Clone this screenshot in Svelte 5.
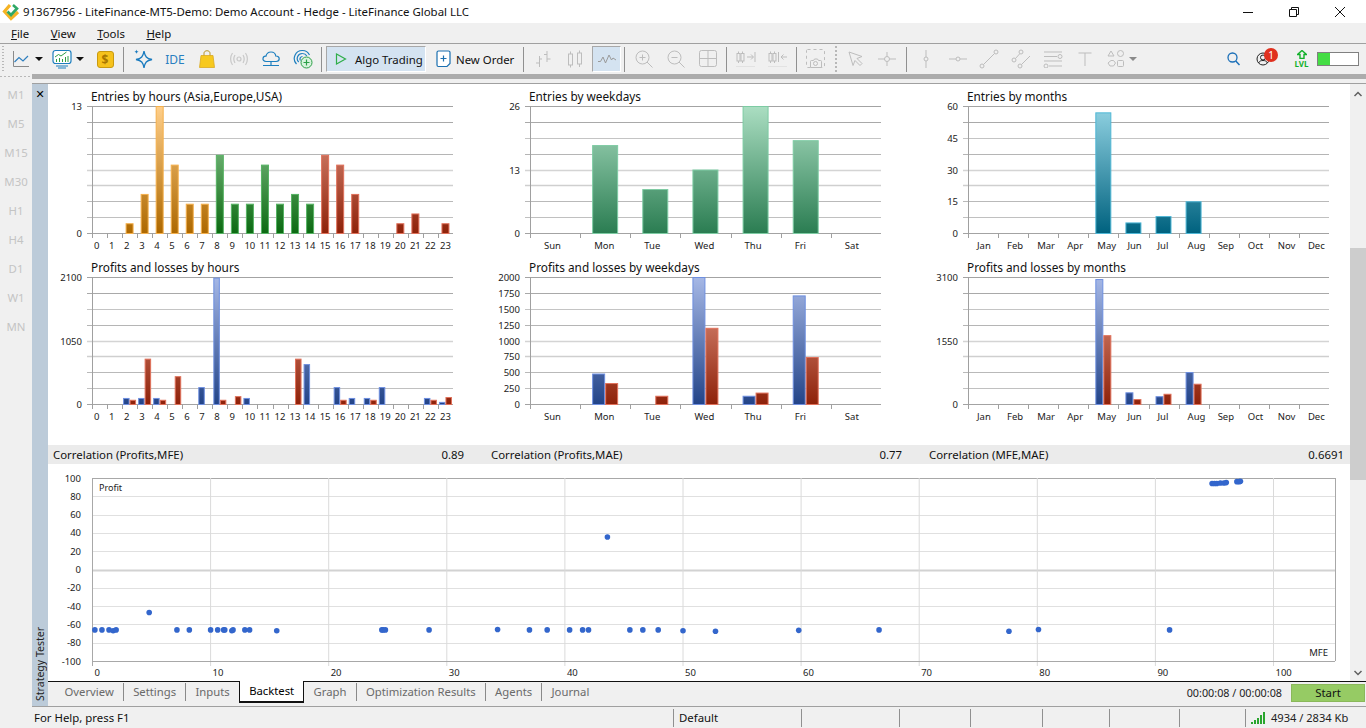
<script lang="ts">
	const hours = Array.from({ length: 24 }, (_, i) => String(i));
	const weekdays = ['Sun', 'Mon', 'Tue', 'Wed', 'Thu', 'Fri', 'Sat'];
	const months = ['Jan', 'Feb', 'Mar', 'Apr', 'May', 'Jun', 'Jul', 'Aug', 'Sep', 'Oct', 'Nov', 'Dec'];

	const palette: Record<string, { top: string; bottom: string; edge: string }> = {
		orange: { top: '#ffcf8a', bottom: '#ad6800', edge: '#f5b04c' },
		green: { top: '#9fd4a4', bottom: '#0c6a12', edge: '#55b363' },
		red: { top: '#ea9f8c', bottom: '#8e220a', edge: '#e0705a' },
		mint: { top: '#abdec2', bottom: '#2b7d52', edge: '#7dcba3' },
		teal: { top: '#92d3e3', bottom: '#00627f', edge: '#4fb7d6' },
		blue: { top: '#a6b8e6', bottom: '#234488', edge: '#6e8fe0' }
	};

	const hourColor = (i: number) => (i < 8 ? 'orange' : i < 15 ? 'green' : 'red');

	const charts = [
		{
			title: 'Entries by hours (Asia,Europe,USA)',
			labels: hours,
			labelOffset: 2,
			width: 361,
			max: 13,
			ticks: ['13', '', '', '', '', '', '', '', '0'],
			barWidth: 8,
			series: [
				{
					colorAt: hourColor,
					offset: 3.5,
					values: [0, 0, 1, 4, 13, 7, 3, 3, 8, 3, 3, 7, 3, 4, 3, 8, 7, 4, 0, 0, 1, 2, 0, 1]
				}
			]
		},
		{
			title: 'Entries by weekdays',
			labels: weekdays,
			labelOffset: 14,
			width: 351,
			max: 26,
			ticks: ['26', '', '', '', '13', '', '', '', '0'],
			barWidth: 26,
			series: [{ colorAt: () => 'mint', offset: 12, values: [0, 18, 9, 13, 26, 19, 0] }]
		},
		{
			title: 'Entries by months',
			labels: months,
			labelOffset: 9,
			width: 361,
			max: 60,
			ticks: ['60', '', '45', '', '30', '', '15', '', '0'],
			barWidth: 16,
			series: [{ colorAt: () => 'teal', offset: 7, values: [0, 0, 0, 0, 57, 5, 8, 15, 0, 0, 0, 0] }]
		},
		{
			title: 'Profits and losses by hours',
			labels: hours,
			labelOffset: 2,
			width: 361,
			max: 2100,
			ticks: ['2100', '', '', '', '1050', '', '', '', '0'],
			barWidth: 6.5,
			series: [
				{
					colorAt: () => 'blue',
					offset: 1,
					values: [0, 0, 100, 100, 100, 0, 0, 280, 2090, 0, 100, 0, 0, 0, 660, 0, 280, 100, 100, 280, 0, 0, 100, 35]
				},
				{
					colorAt: () => 'red',
					offset: 7.5,
					values: [0, 0, 70, 750, 70, 460, 0, 0, 70, 130, 0, 0, 0, 750, 0, 0, 70, 0, 70, 0, 0, 0, 70, 115]
				}
			]
		},
		{
			title: 'Profits and losses by weekdays',
			labels: weekdays,
			labelOffset: 14,
			width: 351,
			max: 2000,
			ticks: ['2000', '1750', '1500', '1250', '1000', '750', '500', '250', '0'],
			barWidth: 13,
			series: [
				{ colorAt: () => 'blue', offset: 12, values: [0, 480, 0, 2000, 130, 1710, 0] },
				{ colorAt: () => 'red', offset: 25, values: [0, 330, 130, 1200, 180, 740, 0] }
			]
		},
		{
			title: 'Profits and losses by months',
			labels: months,
			labelOffset: 9,
			width: 361,
			max: 3100,
			ticks: ['3100', '', '', '', '1550', '', '', '', '0'],
			barWidth: 8,
			series: [
				{ colorAt: () => 'blue', offset: 7, values: [0, 0, 0, 0, 3050, 285, 190, 780, 0, 0, 0, 0] },
				{ colorAt: () => 'red', offset: 15, values: [0, 0, 0, 0, 1680, 120, 250, 495, 0, 0, 0, 0] }
			]
		}
	];

	const plotTop = 22;
	const plotH = 127;
	const axisX = 44;
	const gridColors = ['#a3a3a3', '#a9a9a9', '#c4c4c4', '#b5b5b5', '#d4d4d4', '#cfcfcf', '#b9b9b9', '#c0c0c0', '#a3a3a3'];
	const gridY = (i: number) => Math.round(plotTop + (plotH * i) / 8) + 0.5;

	const correlations = [
		{ label: 'Correlation (Profits,MFE)', value: '0.89' },
		{ label: 'Correlation (Profits,MAE)', value: '0.77' },
		{ label: 'Correlation (MFE,MAE)', value: '0.6691' }
	];

	// scatter: [MFE, Profit]
	const points = [
		[0.2, -66], [0.8, -66], [1.4, -66], [1.75, -67], [2, -66], [4.8, -47], [7.15, -66], [8.2, -66],
		[10, -66], [10.6, -66], [11.1, -66], [11.2, -66], [11.8, -67], [11.9, -66], [12.9, -66], [13.3, -66],
		[15.6, -67], [24.5, -66], [24.6, -66], [24.8, -66], [28.5, -66], [34.3, -65.5], [37, -66], [38.5, -66],
		[40.4, -66], [41.5, -66], [42, -66], [43.6, 35.5], [45.5, -66], [46.6, -66], [47.9, -66], [50, -67],
		[52.75, -67.5], [59.8, -66.5], [66.6, -66], [77.6, -67.5], [80.1, -65.5], [91.2, -66],
		[94.8, 94], [95, 94], [95.2, 94], [95.5, 94.5], [95.8, 94.5], [96, 95], [96.9, 96], [97.1, 96], [97.2, 96.5]
	];
	const scX = (v: number) => 44.5 + v * 11.81;
	const scY = (v: number) => 14 + ((100 - v) / 200) * 183;
	const scTicksX = Array.from({ length: 11 }, (_, i) => i * 10);
	const scTicksY = Array.from({ length: 11 }, (_, i) => 100 - i * 20);

	const frames = ['M1', 'M5', 'M15', 'M30', 'H1', 'H4', 'D1', 'W1', 'MN'];
	const menus = [
		['F', 'ile'],
		['V', 'iew'],
		['T', 'ools'],
		['H', 'elp']
	];
	const tabs = ['Overview', 'Settings', 'Inputs', 'Backtest', 'Graph', 'Optimization Results', 'Agents', 'Journal'];
	const statusCells = [98, 71, 72, 67, 70, 66];
</script>

<div class="window">
	<header class="titlebar">
		<svg class="logo" width="20" height="20" viewBox="0 0 20 20">
			<path d="M9 3 3.5 9.5 10 16.5 17 10" fill="none" stroke="#f5b324" stroke-width="3.2" />
			<path d="M6.5 9.5 10 13 16 6.5 12 3" fill="none" stroke="#2fa866" stroke-width="2.6" />
		</svg>
		<span class="title-text">91367956 - LiteFinance-MT5-Demo: Demo Account - Hedge - LiteFinance Global LLC</span>
		<div class="win-controls">
			<svg width="12" height="12" viewBox="0 0 12 12"><path d="M1 6.5h10" stroke="#111" /></svg>
			<svg width="12" height="12" viewBox="0 0 12 12"><path d="M1.5 3.5h7v7h-7zM3.5 3.5v-2h7v7h-2" fill="none" stroke="#111" /></svg>
			<svg width="12" height="12" viewBox="0 0 12 12"><path d="M1 1l10 10M11 1 1 11" stroke="#111" /></svg>
		</div>
	</header>

	<nav class="menubar">
		{#each menus as m}
			<span class="menu-item"><u>{m[0]}</u>{m[1]}</span>
		{/each}
	</nav>

	<div class="toolbar">
		<span class="grip"></span>
		<span class="ico w-24">
			<svg width="18" height="18" viewBox="0 0 18 18"><path d="M1.5 1v15.5H17" fill="none" stroke="#8a8a8a" /><path d="M2.5 12 7 7.5l4 3.5 5-5" fill="none" stroke="#2f7fbf" stroke-width="1.2" /></svg>
		</span>
		<span class="caret dark first"></span>
		<span class="ico w-26 monitor">
			<svg width="20" height="20" viewBox="0 0 20 20">
				<rect x="1" y="1.5" width="18" height="13" rx="2.5" fill="#fff" stroke="#1d7fbf" stroke-width="1.2" />
				<path d="M3 8l3.500-2.500L9 7l5.500-4" fill="none" stroke="#2f9e44" />
				<path d="M4.500 13v-3M7.500 13V9M10.500 13v-3M13.500 13V8M16 13V7" stroke="#2f9e44" />
				<path d="M4 17h12M6 19h8" stroke="#1d7fbf" />
			</svg>
		</span>
		<span class="caret dark second"></span>
		<span class="ico w-30 coin">
			<span class="dollar">$</span>
		</span>
		<span class="sep"></span>
		<span class="ico">
			<svg width="20" height="20" viewBox="0 0 20 20">
				<path d="M11 2c.9 5.500 2.500 7.500 8 8.500-5.500 1-7.100 3-8 8.500-.9-5.500-2.500-7.500-8-8.500 5.500-1 7.100-3 8-8.500z" fill="none" stroke="#1a7bbf" stroke-width="1.3" />
				<path d="M3.500 .5c.3 1.500.7 1.900 2.200 2.200-1.500.3-1.900.7-2.200 2.200C3.200 3.400 2.800 3 1.300 2.700 2.800 2.400 3.200 2 3.500 .5z" fill="#1a7bbf" />
			</svg>
		</span>
		<span class="ico ide">IDE</span>
		<span class="ico">
			<svg width="16" height="18" viewBox="0 0 16 18">
				<path d="M5 6V3c0-3 6-3 6 0v3" fill="none" stroke="#b8962a" />
				<path d="M2 5.500h12l1.500 12H.5z" fill="#f7c91e" stroke="#d9aa22" stroke-width=".8" />
			</svg>
		</span>
		<span class="ico">
			<svg width="18" height="14" viewBox="0 0 18 14" fill="none" stroke="#c8c8c8" stroke-width="1.2">
				<circle cx="9" cy="7" r="2" />
				<path d="M5 3c-1.500 2.500-1.500 5.500 0 8M13 3c1.500 2.500 1.500 5.500 0 8M2.500 1c-2.500 3.500-2.500 8.500 0 12M15.500 1c2.500 3.500 2.500 8.500 0 12" />
			</svg>
		</span>
		<span class="ico">
			<svg width="18" height="18" viewBox="0 0 18 18" fill="none" stroke="#1d7fbf" stroke-width="1.2">
				<path d="M4 11.500C1.500 11.500.8 9.800 1 8.500c.2-1.500 1.500-2.500 3-2.300C4.500 3.500 6.500 2 9 2c2.800 0 4.500 2 4.800 4 2-.1 3.400 1.200 3.400 2.800 0 1.500-1.200 2.700-3 2.700z" />
				<path d="M9 12v3M1 15.500h16" />
			</svg>
		</span>
		<span class="ico">
			<svg width="20" height="20" viewBox="0 0 20 20" fill="none">
				<path d="M9.500 1.500a8 8 0 0 0-6 13.500M9.500 4.500a5 5 0 0 0-3.800 8.500M9.500 1.500a8 8 0 0 1 7 4.500M9.500 4.500c2 0 3.500 1 4.300 2.500M9.500 7.500a2.500 2.500 0 0 0-2 4" stroke="#1d7fbf" stroke-width="1.2" />
				<circle cx="13.500" cy="13.500" r="5.500" fill="#d8f3dd" stroke="#2c9f47" />
				<path d="M13.500 10.500v6M10.500 13.500h6" stroke="#2c9f47" stroke-width="1.2" />
			</svg>
		</span>
		<span class="sep tight"></span>
		<span class="algo">
			<svg width="12" height="12" viewBox="0 0 12 12"><path d="M1.500 1v10l9-5z" fill="none" stroke="#2fae4a" stroke-width="1.2" /></svg>
			<span>Algo Trading</span>
		</span>
		<span class="order">
			<svg width="15" height="18" viewBox="0 0 15 18">
				<path d="M11 16.500H2.500a1.500 1.500 0 0 1-1.500-1.500V2.500A1.500 1.500 0 0 1 2.500 1h10A1.500 1.500 0 0 1 14 2.500V13.500z" fill="#fff" stroke="#1a6fb0" stroke-width="1.2" />
				<path d="M7.500 5.500v6M4.500 8.500h6" stroke="#1a6fb0" stroke-width="1.2" />
			</svg>
			<span>New Order</span>
		</span>
		<span class="sep flush"></span>
		<span class="ico off">
			<svg width="18" height="18" viewBox="0 0 18 18"><path d="M5.500 6v11M2 13h3.500M5.500 9H8M13 1v11M13 4.500h-3M13 9h3.500" /></svg>
		</span>
		<span class="ico off">
			<svg width="14" height="18" viewBox="0 0 14 18"><rect x=".5" y="4" width="4" height="11" /><rect x="9.500" y="3" width="4" height="11" /><path d="M2.500 1.500V4M2.500 15v2.500M11.500 .5V3M11.500 14v3" /></svg>
		</span>
		<span class="ico off selected">
			<svg width="18" height="12" viewBox="0 0 18 12"><path d="M0 8.500h2.500L5 4l2.500 6L11 2l2.500 5 1.500-2 3 2" stroke="#9a9a9a" /></svg>
		</span>
		<span class="sep"></span>
		<span class="ico off">
			<svg width="18" height="18" viewBox="0 0 18 18"><circle cx="7.500" cy="7.500" r="6.500" /><path d="M12 12l5.500 5.500M7.500 4.500v6M4.500 7.500h6" /></svg>
		</span>
		<span class="ico off">
			<svg width="18" height="18" viewBox="0 0 18 18"><circle cx="7.500" cy="7.500" r="6.500" /><path d="M12 12l5.500 5.500M4.500 7.500h6" /></svg>
		</span>
		<span class="ico off">
			<svg width="18" height="18" viewBox="0 0 18 18"><rect x=".5" y=".5" width="17" height="16" rx="2" /><path d="M9 .5v16M.5 8.500h17" /></svg>
		</span>
		<span class="sep tight"></span>
		<span class="ico off">
			<svg width="20" height="18" viewBox="0 0 20 18"><path d="M2.500 1.500v2M2.500 11v2M6.500 1.500v2M6.500 11v2M11 7h6M15 4.500 17.500 7 15 9.500M19 2v10" /><rect x="1" y="3.500" width="3" height="7.500" /><rect x="5" y="3.500" width="3" height="7.500" /><path d="M0 16.500h19" stroke="#e2e2e2" /></svg>
		</span>
		<span class="ico off">
			<svg width="20" height="18" viewBox="0 0 20 18"><path d="M2.500 1.500v2M2.500 11v2M6.500 1.500v2M6.500 11v2M19 7h-6M15.500 4.500 13 7l2.500 2.500M10.500 2v10" /><rect x="1" y="3.500" width="3" height="7.500" /><rect x="5" y="3.500" width="3" height="7.500" /><path d="M0 16.500h19" stroke="#e2e2e2" /></svg>
		</span>
		<span class="sep tight"></span>
		<span class="ico off">
			<svg width="20" height="20" viewBox="0 0 20 20"><rect x=".5" y=".5" width="18" height="18" rx="1" stroke-dasharray="3 3" /><path d="M4.500 18.500v-6a1 1 0 0 1 1-1h2l1-1.500h3l1 1.500h2a1 1 0 0 1 1 1v6z" fill="#f0f0f0" /><circle cx="9.500" cy="14.500" r="2" /></svg>
		</span>
		<span class="dots"></span>
		<span class="ico off">
			<svg width="15" height="16" viewBox="0 0 15 16"><path d="M1 1l13 4.500-5 2 5 5-2 2-5-5-2 5z" /></svg>
		</span>
		<span class="ico off">
			<svg width="18" height="18" viewBox="0 0 18 18"><circle cx="9" cy="9" r="2.500" /><path d="M0 9h6.500M11.500 9H18M9 2v4.500M9 11.500V16" /></svg>
		</span>
		<span class="sep"></span>
		<span class="ico off">
			<svg width="8" height="20" viewBox="0 0 8 20"><circle cx="4" cy="10" r="2" /><path d="M4 1v7M4 12v7" /></svg>
		</span>
		<span class="ico off w-31">
			<svg width="20" height="8" viewBox="0 0 20 8"><circle cx="10" cy="4" r="2" /><path d="M1 4h7M12 4h7" /></svg>
		</span>
		<span class="ico off">
			<svg width="20" height="20" viewBox="0 0 20 20"><circle cx="3" cy="17" r="2" /><circle cx="17" cy="3" r="2" /><path d="M4.500 15.500l11-11" /></svg>
		</span>
		<span class="ico off">
			<svg width="20" height="20" viewBox="0 0 20 20"><circle cx="3" cy="11" r="2" /><circle cx="10" cy="3" r="2" /><circle cx="9" cy="17" r="2" /><path d="M4.500 9.500 8.500 5M10.500 15.500 19 7" /></svg>
		</span>
		<span class="ico off">
			<svg width="20" height="18" viewBox="0 0 20 18"><path d="M1 2h18M1 6.500h13M1 11h18M6 16h13" /><circle cx="17" cy="6.500" r="2" /><circle cx="3" cy="16" r="2" /></svg>
		</span>
		<span class="ico off">
			<svg width="14" height="14" viewBox="0 0 14 14"><path d="M.5 1h13M7 1v13" /></svg>
		</span>
		<span class="ico off w-26 shapes">
			<svg width="18" height="18" viewBox="0 0 18 18"><path d="M4 1l3 5H1z" /><circle cx="13.500" cy="3.500" r="3" /><path d="M1 13l3-2.500h2.500l2 2.500-2 3H3z" /><rect x="10.500" y="10.500" width="6" height="6" rx="1" /></svg>
		</span>
		<span class="caret"></span>
		<span class="tool-right">
			<svg width="13" height="14" viewBox="0 0 13 14"><circle cx="5.500" cy="5.500" r="4.500" fill="none" stroke="#1a6fb8" stroke-width="1.3" /><path d="M8.800 9l3.700 4" stroke="#1a6fb8" stroke-width="1.5" /></svg>
			<span class="profile">
				<svg width="14" height="14" viewBox="0 0 14 14" fill="none" stroke="#222"><circle cx="7" cy="7" r="6" /><circle cx="7" cy="5.500" r="2.500" /><path d="M2.500 11c1-2 2.500-2.500 4.500-2.500s3.500.5 4.500 2.500" /></svg>
				<span class="badge">1</span>
			</span>
			<span class="lvl">
				<svg width="10" height="9" viewBox="0 0 10 9"><path d="M5 .5 9.500 4.500H7V8.500H3V4.500H.5z" fill="none" stroke="#12b02a" stroke-width="1.4" /></svg>
				<span>LVL</span>
			</span>
			<span class="meter"><span class="meter-fill"></span></span>
		</span>
	</div>

	<div class="graybar">
		<span class="graybar-dots"></span>
		<span class="graybar-fill"></span>
	</div>
	<div class="graybar-gap"></div>

	<div class="body">
		<aside class="frames">
			{#each frames as f}
				<span>{f}</span>
			{/each}
		</aside>
		<div class="strip">
			<span class="strip-close">✕</span>
			<span class="strip-title">Strategy Tester</span>
		</div>
		<main class="panel">
			<div class="panel-scroll">
				<div class="content">
					<div class="chart-grid">
						{#each charts as c, ci}
							{@const slotW = c.width / c.labels.length}
							<svg class="chart" width="438" height="171">
								<defs>
									{#each Object.entries(palette) as [name, p]}
										<linearGradient id="g{ci}-{name}" gradientUnits="userSpaceOnUse" x1="0" x2="0" y1={plotTop} y2={plotTop + plotH}>
											<stop offset="0" stop-color={p.top} />
											<stop offset="1" stop-color={p.bottom} />
										</linearGradient>
									{/each}
								</defs>
								<text class="chart-title" x="43" y="17">{c.title}</text>
								{#each gridColors as col, i}
									<line x1={axisX - 5} x2={axisX + c.width} y1={gridY(i)} y2={gridY(i)} stroke={col} stroke-width={i === 4 || i === 5 ? 1.6 : 1} />
									{#if c.ticks[i]}
										<text class="num" x={axisX - 10} y={gridY(i) + 3.5} text-anchor="end">{c.ticks[i]}</text>
									{/if}
								{/each}
								<line x1={axisX + 0.5} x2={axisX + 0.5} y1={plotTop} y2={plotTop + plotH + 5} stroke="#a0a0a0" />
								{#each c.labels as label, i}
									<line x1={Math.round(axisX + i * slotW) + 0.5} x2={Math.round(axisX + i * slotW) + 0.5} y1={plotTop + plotH} y2={plotTop + plotH + 5} stroke="#a0a0a0" />
									<text class="num" x={axisX + i * slotW + c.labelOffset} y={plotTop + plotH + 16}>{label}</text>
								{/each}
								{#each c.series as s}
									{#each s.values as v, i}
										{#if v > 0}
											{@const h = (v / c.max) * plotH}
											<rect
												x={axisX + i * slotW + s.offset + 0.5}
												y={plotTop + plotH - h + 0.5}
												width={c.barWidth - 1}
												height={h}
												fill="url(#g{ci}-{s.colorAt(i)})"
												stroke={palette[s.colorAt(i)].edge}
											/>
										{/if}
									{/each}
								{/each}
							</svg>
						{/each}
					</div>

					<div class="correlations">
						{#each correlations as row}
							<div class="corr">
								<span>{row.label}</span>
								<span>{row.value}</span>
							</div>
						{/each}
					</div>

					<svg class="scatter" width="1302" height="217">
						{#each scTicksY as v}
							<line x1="44" x2="1287" y1={Math.round(scY(v)) + 0.5} y2={Math.round(scY(v)) + 0.5} stroke={v === 0 ? '#d2d2d2' : v === 100 || v === -100 ? '#a8a8a8' : '#e0e0e0'} stroke-width={v === 0 ? 2 : 1} />
							<text class="num" x="33" y={scY(v) + 3.5} text-anchor="end">{v}</text>
						{/each}
						{#each scTicksX as v}
							<line x1={scX(v)} x2={scX(v)} y1="14" y2="202" stroke={v === 0 ? '#a8a8a8' : '#dadada'} />
							<text class="num" x={scX(v) + 2} y="212">{v}</text>
						{/each}
						<line x1="1287.5" x2="1287.5" y1="14" y2="197" stroke="#a8a8a8" />
						<line x1="44" x2="1287" y1="197.5" y2="197.5" stroke="#a8a8a8" />
						<text class="tiny" x="51" y="27">Profit</text>
						<text class="num" x="1280" y="192" text-anchor="end">MFE</text>
						{#each points as p}
							<circle cx={scX(p[0])} cy={scY(p[1])} r="2.8" fill="#3366cc" />
						{/each}
					</svg>
				</div>
				<div class="scrollbar">
					<svg width="10" height="6" viewBox="0 0 10 6"><path d="M1.5 5 5 1.500 8.500 5" fill="none" stroke="#606060" stroke-width="1.5" /></svg>
					<span class="thumb"></span>
					<svg width="10" height="6" viewBox="0 0 10 6"><path d="M1.5 1 5 4.500 8.500 1" fill="none" stroke="#606060" stroke-width="1.5" /></svg>
				</div>
			</div>

			<div class="tabbar">
				<div class="tabs">
					{#each tabs as t}
						<span class="tab" class:active={t === 'Backtest'}>{t}</span>
					{/each}
				</div>
				<span class="timer">00:00:08 / 00:00:08</span>
				<span class="start">Start</span>
			</div>
		</main>
	</div>

	<footer class="statusbar">
		<span class="help">For Help, press F1</span>
		<span class="cell default">Default</span>
		{#each statusCells as w}
			<span class="cell" style="width: {w}px"></span>
		{/each}
		<span class="cell net">
			<svg width="15" height="12" viewBox="0 0 15 12"><path d="M1 12v-2M4 12V8M7 12V6M10 12V3M13 12V0" stroke="#2aa52e" stroke-width="2" /></svg>
			<span>4934 / 2834 Kb</span>
		</span>
	</footer>
</div>

<style>
	:global(body) {
		margin: 0;
		background: #f0f0f0;
	}

	.window {
		width: 1366px;
		height: 728px;
		display: flex;
		flex-direction: column;
		overflow: hidden;
		background: #f0f0f0;
		color: #111;
		font-family: 'Noto Sans', 'Liberation Sans', sans-serif;
		font-size: 11.4px;
	}

	.titlebar {
		height: 23px;
		flex-shrink: 0;
		display: flex;
		align-items: center;
		background: #fff;
		padding-left: 1px;
	}

	.logo {
		margin-right: 2px;
	}

	.title-text {
		font-size: 11.45px;
		white-space: nowrap;
	}

	.win-controls {
		margin-left: auto;
		display: flex;
		gap: 34px;
		padding-right: 20px;
	}

	.menubar {
		height: 20px;
		flex-shrink: 0;
		display: flex;
		align-items: center;
		padding-left: 11px;
		gap: 21.5px;
		border-bottom: 1px solid #a0a0a0;
	}

	.toolbar {
		height: 30px;
		flex-shrink: 0;
		display: flex;
		align-items: center;
		padding-left: 2px;
	}

	.grip {
		width: 2px;
		height: 26px;
		margin-right: 5px;
		flex-shrink: 0;
		background: repeating-linear-gradient(to bottom, #b8b8b8 0 1px, transparent 1px 3px);
	}

	.ico {
		width: 32px;
		height: 26px;
		flex-shrink: 0;
		display: flex;
		align-items: center;
		justify-content: center;
	}

	.w-24 { width: 24px; }
	.w-26 { width: 26px; }
	.w-30 { width: 30px; }
	.w-31 { width: 31px; }

	.monitor { margin-left: 6px; }
	.coin { margin-left: 6px; }
	.shapes { margin-left: 2px; }

	.ico.off svg {
		fill: none;
		stroke: #bdbdbd;
	}

	.ico.selected {
		width: 29px;
		background: #d4e3f1;
		border: 1px solid #a8a8a8;
		border-right-color: #fff;
		border-bottom-color: #fff;
		box-sizing: border-box;
		margin: 0 0 0 1px;
	}

	.caret {
		width: 0;
		height: 0;
		flex-shrink: 0;
		border-left: 4px solid transparent;
		border-right: 4px solid transparent;
		border-top: 4px solid #8a8a8a;
	}

	.caret.dark {
		border-top-color: #111;
	}

	.caret.first { margin-left: 2px; }
	.caret.second { margin-left: 1px; }

	.dollar {
		width: 17px;
		height: 17px;
		box-sizing: border-box;
		display: flex;
		align-items: center;
		justify-content: center;
		background: #f6c21c;
		border: 1px solid #c99a10;
		border-radius: 3px;
		color: #a87600;
		font-weight: 700;
		font-size: 12px;
	}

	.ide {
		color: #2a7fc0;
		font-size: 12px;
	}

	.sep {
		width: 1px;
		height: 25px;
		flex-shrink: 0;
		background: #909090;
		margin: 0 3px;
	}

	.sep.tight { margin-left: 2px; }
	.sep.flush { margin-left: 0; }

	.dots {
		width: 2px;
		height: 26px;
		flex-shrink: 0;
		margin: 0 2px 0 3px;
		background: repeating-linear-gradient(to bottom, #b8b8b8 0 2px, transparent 2px 4px);
	}

	.algo {
		width: 100px;
		height: 26px;
		flex-shrink: 0;
		display: flex;
		align-items: center;
		gap: 8px;
		padding-left: 8px;
		box-sizing: border-box;
		margin-left: 1px;
		background: #d4e3f1;
		border: 1px solid #a8a8a8;
		border-right-color: #fff;
		border-bottom-color: #fff;
		white-space: nowrap;
	}

	.order {
		width: 97px;
		flex-shrink: 0;
		display: flex;
		align-items: center;
		gap: 5px;
		padding-left: 10px;
		box-sizing: border-box;
		white-space: nowrap;
	}

	.tool-right {
		margin-left: auto;
		display: flex;
		align-items: center;
		padding-right: 7px;
	}

	.profile {
		position: relative;
		display: flex;
		margin-left: 16px;
		margin-right: 25px;
	}

	.badge {
		position: absolute;
		left: 8px;
		top: -4px;
		width: 14px;
		height: 14px;
		border-radius: 50%;
		background: #e0301e;
		color: #fff;
		font-size: 10px;
		line-height: 14px;
		text-align: center;
	}

	.lvl {
		width: 13px;
		display: flex;
		flex-direction: column;
		align-items: center;
		color: #12b02a;
		font-size: 8px;
		font-weight: 700;
		line-height: 9px;
		margin-right: 9px;
	}

	.meter {
		width: 42px;
		height: 14px;
		display: block;
		box-sizing: border-box;
		border: 1px solid #808080;
		background: #fff;
	}

	.meter-fill {
		display: block;
		width: 12px;
		height: 100%;
		background: #44dd44;
	}

	.graybar {
		height: 9px;
		flex-shrink: 0;
		display: flex;
		align-items: flex-start;
	}

	.graybar-dots {
		width: 30px;
		height: 1px;
		margin: 2px 2px 0 0;
		flex-shrink: 0;
		background: repeating-linear-gradient(to right, #b8b8b8 0 2px, transparent 2px 4px);
	}

	.graybar-fill {
		flex: 1;
		height: 5px;
		background: #acacac;
	}

	.graybar-gap {
		height: 1px;
		flex-shrink: 0;
		margin-left: 32px;
		background: #a0a0a0;
	}

	.body {
		height: 622px;
		flex-shrink: 0;
		display: flex;
	}

	.frames {
		width: 32px;
		flex-shrink: 0;
		display: flex;
		flex-direction: column;
		align-items: center;
		margin-top: -4px;
		color: #c4c4c4;
		line-height: 29px;
	}

	.strip {
		width: 16px;
		flex-shrink: 0;
		display: flex;
		flex-direction: column;
		align-items: center;
		justify-content: space-between;
		background: #bccbd9;
	}

	.strip-close {
		margin-top: 4px;
		font-size: 11px;
		line-height: 14px;
		font-weight: 700;
		color: #000;
		font-family: 'DejaVu Sans', sans-serif;
	}

	.strip-title {
		writing-mode: vertical-rl;
		transform: rotate(180deg);
		margin-bottom: 5px;
		font-size: 10.5px;
		color: #222;
		white-space: nowrap;
	}

	.panel {
		flex: 1;
		min-width: 0;
		display: flex;
		flex-direction: column;
	}

	.panel-scroll {
		height: 597px;
		flex-shrink: 0;
		display: flex;
		background: #fff;
		border-bottom: 1px solid #111;
	}

	.content {
		width: 1302px;
		flex-shrink: 0;
	}

	.chart-grid {
		display: grid;
		grid-template-columns: 438px 438px 426px;
		grid-auto-rows: 171px;
		overflow: hidden;
	}

	.chart {
		display: block;
	}

	.chart-title {
		font-size: 11.8px;
		fill: #111;
	}

	.num {
		font-size: 9.5px;
		fill: #222;
	}

	.tiny {
		font-size: 9px;
		fill: #222;
	}

	.correlations {
		display: grid;
		grid-template-columns: 438px 438px 426px;
		height: 19px;
		margin-top: 19px;
		background: #ebebeb;
		align-items: center;
	}

	.corr {
		display: flex;
		justify-content: space-between;
		padding-left: 5px;
		width: 411px;
	}

	.corr:last-child {
		width: 415px;
	}

	.scatter {
		display: block;
	}

	.scrollbar {
		width: 16px;
		flex-shrink: 0;
		display: flex;
		flex-direction: column;
		align-items: center;
		background: #f0f0f0;
		padding: 7px 0 5px;
		box-sizing: border-box;
		position: relative;
	}

	.thumb {
		position: absolute;
		left: 0;
		top: 164px;
		width: 16px;
		height: 232px;
		background: #cdcdcd;
	}

	.scrollbar svg:last-child {
		margin-top: auto;
	}

	.tabbar {
		height: 24px;
		flex-shrink: 0;
		display: flex;
		align-items: flex-start;
	}

	.tabs {
		display: flex;
		padding-left: 7.3px;
		height: 20px;
		font-size: 11.3px;
	}

	.tab {
		padding: 0 9.2px;
		line-height: 17px;
		height: 18px;
		color: #6a6a6a;
		white-space: nowrap;
		margin-top: 1px;
		border-right: 1px solid #8a8a8a;
	}

	.tab:last-child {
		border-right: 0;
	}

	.tab.active {
		margin-top: -1px;
		height: 20px;
		line-height: 19px;
		color: #000;
		background: #fff;
		border: 1px solid #111;
		border-top: 0;
		border-bottom-width: 2px;
		margin-left: -1px;
	}

	.timer {
		margin-left: auto;
		margin-top: 3px;
		font-size: 10.8px;
		color: #222;
		white-space: nowrap;
	}

	.start {
		width: 74px;
		height: 18px;
		margin: 2px 1px 0 9px;
		background: #96cb64;
		border: 1px solid #8ab85a;
		box-sizing: border-box;
		text-align: center;
		line-height: 16px;
	}

	.statusbar {
		height: 22px;
		flex-shrink: 0;
		display: flex;
		align-items: center;
		border-top: 1px solid #a0a0a0;
		margin-left: 32px;
		box-sizing: border-box;
	}

	.help {
		width: 641px;
		flex-shrink: 0;
		padding-left: 2px;
		box-sizing: border-box;
		white-space: nowrap;
	}

	.cell {
		height: 18px;
		box-sizing: border-box;
		border-left: 1px solid #909090;
		flex-shrink: 0;
		line-height: 18px;
	}

	.default {
		width: 128px;
		padding-left: 5px;
		white-space: nowrap;
	}

	.net {
		display: flex;
		align-items: center;
		gap: 5px;
		padding-left: 5px;
		white-space: nowrap;
		color: #222;
		font-size: 11.1px;
	}
</style>
